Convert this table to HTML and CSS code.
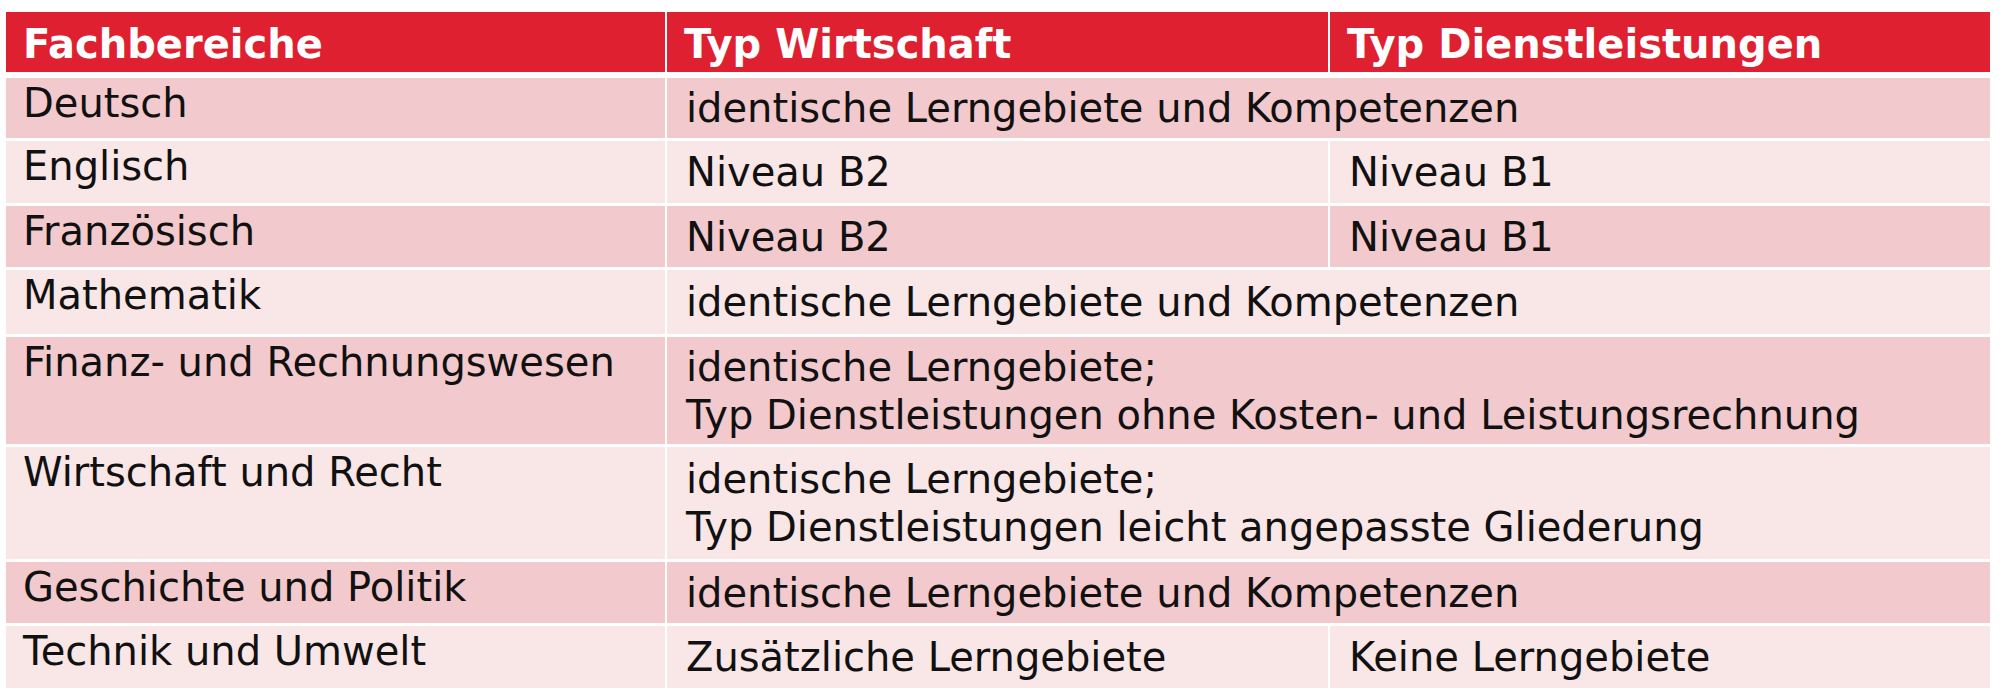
FILE: index.html
```html
<!DOCTYPE html>
<html lang="de">
<head>
<meta charset="utf-8">
<title>Fachbereiche</title>
<link rel="stylesheet" href="styles.css">
</head>
<body>
<div class="table">
  <div class="thead">
    <div class="th">Fachbereiche</div>
    <div class="th">Typ Wirtschaft</div>
    <div class="th">Typ Dienstleistungen</div>
  </div>
  <div class="tbody">
    <div class="row dark h60">
      <div class="subj">Deutsch</div>
      <div class="val span">identische Lerngebiete und Kompetenzen</div>
    </div>
    <div class="row light h62">
      <div class="subj">Englisch</div>
      <div class="val">Niveau B2</div>
      <div class="val">Niveau B1</div>
    </div>
    <div class="row dark h61">
      <div class="subj">Französisch</div>
      <div class="val">Niveau B2</div>
      <div class="val">Niveau B1</div>
    </div>
    <div class="row light h64">
      <div class="subj">Mathematik</div>
      <div class="val span">identische Lerngebiete und Kompetenzen</div>
    </div>
    <div class="row dark h107">
      <div class="subj">Finanz- und Rechnungswesen</div>
      <div class="val span">identische Lerngebiete;<br>Typ Dienstleistungen ohne Kosten- und Leistungsrechnung</div>
    </div>
    <div class="row light h112">
      <div class="subj">Wirtschaft und Recht</div>
      <div class="val span">identische Lerngebiete;<br>Typ Dienstleistungen leicht angepasste Gliederung</div>
    </div>
    <div class="row dark h61">
      <div class="subj">Geschichte und Politik</div>
      <div class="val span">identische Lerngebiete und Kompetenzen</div>
    </div>
    <div class="row light h62">
      <div class="subj">Technik und Umwelt</div>
      <div class="val">Zusätzliche Lerngebiete</div>
      <div class="val">Keine Lerngebiete</div>
    </div>
  </div>
</div>
</body>
</html>
```
FILE: styles.css
```css
html, body {
  margin: 0;
  padding: 0;
  background: #ffffff;
}
body {
  padding: 12px 10px 0 6px;
  font-family: "DejaVu Sans", Verdana, sans-serif;
  font-size: 40px;
  line-height: 48px;
  color: #111111;
}
.table {
  width: 1984px;
  display: flex;
  flex-direction: column;
  gap: 6px;
}
.thead,
.row {
  display: grid;
  grid-template-columns: 659px 661px 660px;
  column-gap: 2px;
}
.thead {
  height: 60px;
}
.th {
  background: #df2030;
  color: #ffffff;
  font-weight: bold;
  padding: 8px 0 0 17px;
  white-space: nowrap;
}
.tbody {
  display: flex;
  flex-direction: column;
  gap: 3px;
}
.row.dark > div {
  background: #f2c9cc;
}
.row.light > div {
  background: #f9e6e6;
}
.h60 { height: 60px; }
.h61 { height: 61px; }
.h62 { height: 62px; }
.h64 { height: 64px; }
.h107 { height: 107px; }
.h112 { height: 112px; }
.subj {
  padding: 1px 0 0 17px;
  white-space: nowrap;
}
.val {
  display: flex;
  flex-direction: column;
  justify-content: center;
  padding-left: 19px;
  white-space: nowrap;
}
.val.span {
  grid-column: 2 / 4;
  display: block;
  align-self: stretch;
  padding-top: 0;
}
.row .val.span {
  display: flex;
  flex-direction: column;
  justify-content: center;
}
```
